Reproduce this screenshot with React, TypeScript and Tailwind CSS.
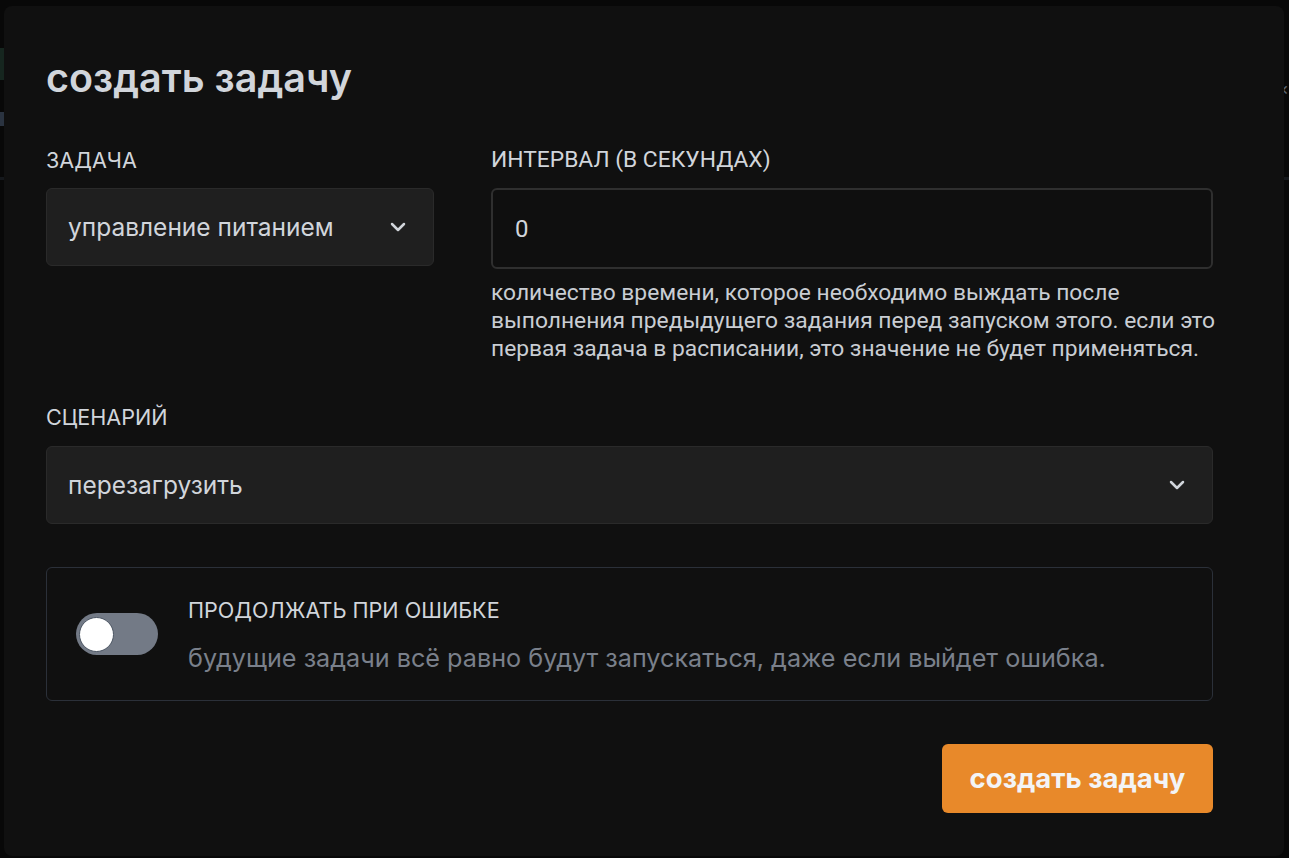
import { ChevronDown } from 'lucide-react';
import { useState } from 'react';

export default function App() {
  const [continueOnError, setContinueOnError] = useState(false);
  const [interval, setInterval] = useState('0');

  return (
    <div className="relative h-[858px] w-full overflow-hidden bg-[#080808] font-['Inter',sans-serif]">
      {/* faint page behind the overlay */}
      <div className="absolute left-0 top-[48px] h-[32px] w-[6px] bg-[#16261f]" />
      <div className="absolute left-0 top-[112px] h-[14px] w-[4px] bg-[#2a3340]" />
      <div className="absolute left-0 top-[177px] h-[3px] w-full bg-[#15181c]" />
      <div className="absolute right-0 top-[80px] text-[18px] leading-none text-[#5b6470]">×</div>

      <div className="absolute left-[4px] top-[6px] h-[850px] w-[1280px] rounded-lg bg-[#101010] pl-[42px] pt-[52px]">
        <div className="w-[1167px]">
          <h1 className="text-[39.5px] font-semibold leading-[40px] text-[#d1d5db]">создать задачу</h1>

          <div className="mt-[48px] grid grid-cols-[388px_722px] gap-[57px]">
            <div>
              <label className="mb-[14px] block text-[21.6px] leading-7 text-[#d1d5db]">ЗАДАЧА</label>
              <button className="flex h-[78px] w-full items-center justify-between rounded-md border border-[#2a2a2a] bg-[#1f1f1f] pl-[21px] pr-[23px] text-[24.5px] text-[#d1d5db]">
                <span>управление питанием</span>
                <ChevronDown size={24} strokeWidth={2.5} className="text-[#d1d5db]" />
              </button>
            </div>
            <div className="font-['Roboto',sans-serif]">
              <label className="mb-[14px] block text-[22.8px] leading-7 text-[#d1d5db]">ИНТЕРВАЛ (В СЕКУНДАХ)</label>
              <input
                value={interval}
                onChange={(e) => setInterval(e.target.value)}
                className="block h-[81px] w-full rounded-md border-2 border-[#2f2f2f] bg-[#0f0f0f] px-[22px] text-[24px] text-[#d1d5db] outline-none"
              />
              <p className="mt-[10px] w-[735px] text-[22.8px] leading-7 text-[#c9cdd3]">
                количество времени, которое необходимо выждать после выполнения предыдущего задания перед запуском этого. если это первая задача в расписании, это значение не будет применяться.
              </p>
            </div>
          </div>

          <label className="mb-[15px] mt-[40px] block text-[21.6px] leading-7 text-[#d1d5db]">СЦЕНАРИЙ</label>
          <button className="flex h-[78px] w-full items-center justify-between rounded-md border border-[#2a2a2a] bg-[#1f1f1f] pl-[21px] pr-[23px] text-[24.5px] text-[#d1d5db]">
            <span>перезагрузить</span>
            <ChevronDown size={24} strokeWidth={2.5} className="text-[#d1d5db]" />
          </button>

          <div className="mt-[43px] flex h-[134px] items-center gap-[30px] rounded-md border border-[#2b3039] pl-[29px]">
            <button
              onClick={() => setContinueOnError(!continueOnError)}
              className={`flex h-[42px] w-[82px] shrink-0 items-center rounded-full px-[3px] ${
                continueOnError ? 'bg-[#e8892a]' : 'bg-[#737a86]'
              }`}
            >
              <span
                className={`h-[35px] w-[35px] rounded-full border border-[#4b5563] bg-white transition-transform ${
                  continueOnError ? 'translate-x-[40px]' : ''
                }`}
              />
            </button>
            <div className="flex flex-col gap-[20px]">
              <div className="text-[21.6px] leading-7 text-[#d1d5db]">ПРОДОЛЖАТЬ ПРИ ОШИБКЕ</div>
              <div className="text-[25.2px] leading-7 text-[#7a808b]">
                будущие задачи всё равно будут запускаться, даже если выйдет ошибка.
              </div>
            </div>
          </div>

          <div className="mt-[43px] flex justify-end">
            <button className="h-[69px] w-[271px] rounded-md bg-[#e8892a] text-[27.5px] font-bold text-[#f3f4f6]">
              создать задачу
            </button>
          </div>
        </div>
      </div>
    </div>
  );
}
